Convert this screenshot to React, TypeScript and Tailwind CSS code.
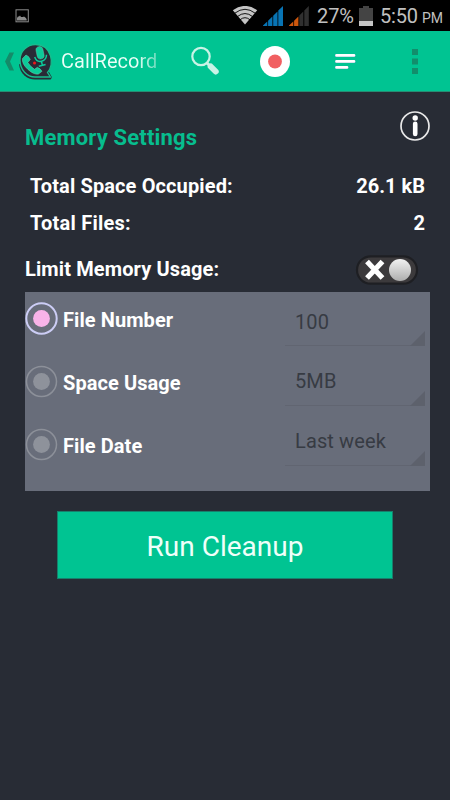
import React from "react";

function StatusBar() {
  return (
    <div className="flex h-[31px] shrink-0 items-center bg-black text-[#c0c0c0]">
      <svg className="ml-[15px] shrink-0" width="14" height="14" viewBox="0 0 14 14">
        <rect x="1" y=".8" width="12.3" height="12" fill="none" stroke="#8c8c8c" />
        <path d="M2 11.500V9l1-1.500h1l1-1 1 1.500h2l1-.5 2 1.500.7 1.500V11.500z" fill="#8c8c8c" />
      </svg>
      <svg className="ml-[203px] shrink-0" width="26" height="20" viewBox="0 0 26 20">
        <path d="M.8 4.300Q13-4.500 25.200 4.300L13 18.500Z" fill="#c4c4c4" />
        <g fill="none" stroke="#000" strokeWidth="0.900">
          <path d="M2.800 7.200Q13-.6 23.200 7.200" />
          <path d="M5.500 10.500Q13 4.600 20.500 10.500" />
          <path d="M8 13.800Q13 9.600 18 13.800" />
        </g>
      </svg>
      <svg className="ml-[5px] shrink-0" width="21" height="20" viewBox="0 0 21 20">
        <path d="M0 20V19.500L4.300 15.500V20zM5.100 20V14.700L9.400 10.500V20zM10.200 20V9.700L14.500 5.500V20zM15.300 20V4.500L20 0V20z" fill="#0874b4" />
      </svg>
      <svg className="ml-[5px] shrink-0" width="21" height="20" viewBox="0 0 21 20">
        <path d="M0 20V19.500L4.300 15.500V20zM5.100 20V14.700L9.400 10.500V20z" fill="#ce570d" />
        <path d="M10.300 20V9.500L14.300 5.500V20zM15.300 20V4.500L19.800 0V20z" fill="#303030" />
      </svg>
      <span className="ml-[7px] w-[42px] text-[20px] leading-[30px] tracking-[-0.1px] whitespace-nowrap">27%</span>
      <svg className="shrink-0" width="14" height="20" viewBox="0 0 14 20">
        <path d="M0 2h4V0h6v2h4v18H0z" fill="#444" />
        <path d="M0 15h14v5H0z" fill="#c6c6c6" />
      </svg>
      <span className="ml-[7px] w-[42px] text-[20px] leading-[30px] tracking-[-0.15px] whitespace-nowrap">5:50</span>
      <span className="mt-[5px] text-[14px] leading-5 tracking-[-0.2px] whitespace-nowrap">PM</span>
    </div>
  );
}

function Logo() {
  return (
    <svg className="ml-[3px] shrink-0" width="36" height="39" viewBox="0 0 36 39">
      <path d="M1 22C2 32 9 37.500 17 37.500H32.500L34 35.500 31 30Z" fill="#292b36" />
      <path d="M17.500 2.500A15.500 15.500 0 0 0 2 18C2 28 9 35 17 35H32.500L29.500 30.500C37 23 34 2.500 17.500 2.500Z" fill="#292b36" stroke="#17bd8e" strokeWidth="1.300" />
      <path
        d="M4.500 16.500L8 13Q11 14 12.300 17.500L9.800 20.500Q12.500 24.800 16.500 27.300L19.300 25.300Q22.500 26.500 24 29.300L20.500 32Q16 33 10 27.500Q3.500 21.500 4.500 16.500Z"
        fill="#0cca99"
        stroke="#6ad6b5"
        strokeWidth=".5"
      />
      <rect x="18.500" y="4.500" width="7" height="12.500" rx="3.500" fill="#0cca99" stroke="#6ad6b5" strokeWidth=".4" transform="rotate(-12 22 10.500)" />
      <path d="M16.700 15Q18.500 20.300 23.500 19.200Q28.500 18 28.500 12.800M23.500 19.500l.8 3.500M20.800 24.200l6.800-1.800" fill="none" stroke="#0cca99" strokeWidth="1.500" />
      <circle cx="16.500" cy="21" r="1.500" fill="#ef1919" />
    </svg>
  );
}

function ActionBar() {
  return (
    <header className="flex h-[61px] shrink-0 items-center border-b border-[#268e73] bg-[#00c492]">
      <svg className="ml-[5px] shrink-0" width="10" height="19" viewBox="0 0 10 19">
        <path d="M4.500 .5h4.500L5 9.500 9 18.500H4.500L0 9.500z" fill="#148b69" />
      </svg>
      <Logo />
      <span className="ml-[7px] w-[97px] bg-linear-to-r from-[#eafff8] from-78% to-[#58d8b8] bg-clip-text text-[20px] leading-7 whitespace-nowrap text-transparent">
        CallRecord
      </span>
      <svg className="ml-[33px] shrink-0" width="30" height="30" viewBox="0 0 30 30">
        <circle cx="10" cy="10.500" r="8.700" fill="none" stroke="#c9f3e6" strokeWidth="2.200" />
        <path d="M16 17l3.500 3.500" stroke="#c9f3e6" strokeWidth="3" />
        <path d="M19.700 20.500l5 5" stroke="#c9f3e6" strokeWidth="6" strokeLinecap="round" />
      </svg>
      <svg className="ml-[39px] shrink-0" width="30" height="31" viewBox="0 0 30 31">
        <ellipse cx="15" cy="15.500" rx="15" ry="15.400" fill="#fff" />
        <circle cx="15" cy="15.500" r="6.900" fill="#f15f61" />
      </svg>
      <svg className="ml-[45px] shrink-0" width="21" height="18" viewBox="0 0 21 18">
        <path d="M1.500 3.500h17.500M1.500 9.500h17.500M1.500 15.500h10.500" stroke="#4c8fb0" strokeWidth="3.200" strokeLinecap="round" />
        <path d="M1.500 3.400h17.500M1.500 9.400h17.500M1.500 15.400h10.500" stroke="#fff" strokeWidth="2.700" strokeLinecap="round" />
      </svg>
      <svg className="ml-[56px] shrink-0" width="6" height="25" viewBox="0 0 6 25">
        <path d="M0 0h6v6H0zM0 9.500h6v6H0zM0 19h6v6H0z" fill="#128e6c" />
      </svg>
    </header>
  );
}

function Toggle() {
  return (
    <svg className="mt-[7px] mr-[11px] shrink-0" width="64" height="30" viewBox="0 0 64 30">
      <defs>
        <linearGradient id="knob" x1="0" y1="0" x2="0" y2="1">
          <stop stopColor="#f2f2f2" />
          <stop offset="1" stopColor="#adadad" />
        </linearGradient>
      </defs>
      <rect x="2" y="1.300" width="60" height="27.400" rx="13.700" fill="#3c3a3c" stroke="#1e1f23" strokeWidth="2.200" />
      <path d="M12 6.500l15.500 16.500M27.500 6.500l-15.500 16.500" stroke="#fff" strokeWidth="5.200" />
      <circle cx="45" cy="15" r="11" fill="url(#knob)" />
    </svg>
  );
}

function Radio({ selected }: { selected: boolean }) {
  return (
    <svg className="shrink-0" width="33" height="34" viewBox="0 0 33 34">
      <circle cx="16.500" cy="16.500" r={selected ? 15.2 : 15} fill="none" stroke={selected ? "#cccdf5" : "#8c9099"} strokeWidth={selected ? 2 : 1.5} />
      <circle cx="16.500" cy="16.500" r="8.400" fill={selected ? "#f8b3e8" : "#8e929b"} />
    </svg>
  );
}

const options = ["File Number", "Space Usage", "File Date"];
const values = ["100", "5MB", "Last week"];

function Limits() {
  return (
    <section className="flex h-[199px] shrink-0 justify-between bg-[#686d7a] pr-[5px]">
      <div className="flex flex-col pt-[10px]">
        {options.map((label, i) => (
          <label key={label} className="flex h-[63px] items-start">
            <Radio selected={i === 0} />
            <span className="ml-[5px] pt-[2.5px] text-[20px] leading-[30px] font-bold tracking-[0.08px] text-white whitespace-nowrap">{label}</span>
          </label>
        ))}
      </div>
      <div className="flex w-[140px] flex-col">
        {values.map((value, i) => (
          <div key={value} className={`mb-px flex items-end justify-between border-b border-[#616571] ${i === 0 ? "h-[54px]" : "h-[59px]"}`}>
            <span className={`ml-[10px] text-[20px] leading-[30px] tracking-[0.12px] text-[#373b43] whitespace-nowrap ${i === 0 ? "mb-[8px]" : "mb-[9px]"}`}>{value}</span>
            <svg width="15" height="15" viewBox="0 0 15 15" className="-mb-px shrink-0">
              <path d="M15 0V15H0z" fill="#5d616c" />
            </svg>
          </div>
        ))}
      </div>
    </section>
  );
}

export default function App() {
  return (
    <div className="flex h-[800px] w-[450px] flex-col overflow-hidden bg-[#282c35] font-['Roboto',sans-serif]">
      <StatusBar />
      <ActionBar />
      <main className="flex flex-col pr-5 pl-[25px]">
        <div className="flex h-[75px] items-start justify-between">
          <h1 className="mt-[31px] text-[22px] leading-[30px] font-bold tracking-[0.17px] text-[#07bd8e] whitespace-nowrap">Memory Settings</h1>
          <svg className="mt-[19px] shrink-0" width="31" height="31" viewBox="0 0 31 31">
            <circle cx="16" cy="15" r="14" fill="none" stroke="#e9e9e9" strokeWidth="1.700" />
            <circle cx="16.200" cy="7" r="2.700" fill="#fff" />
            <path d="M16.200 12.700v10.300" stroke="#fff" strokeWidth="4.600" strokeLinecap="round" />
          </svg>
        </div>
        <div className="flex h-[37px] items-center justify-between pr-[5px] pl-[5px] text-[20px] font-bold text-white">
          <span className="tracking-[0.12px]">Total Space Occupied:</span>
          <span>26.1 kB</span>
        </div>
        <div className="flex h-[37px] items-center justify-between pr-[5px] pl-[5px] text-[20px] font-bold text-white">
          <span className="tracking-[0.25px]">Total Files:</span>
          <span>2</span>
        </div>
        <div className="flex h-[51px] items-center justify-between">
          <span className="mt-[5px] text-[20px] font-bold tracking-[0.12px] text-white">Limit Memory Usage:</span>
          <Toggle />
        </div>
        <Limits />
        <button className="mt-[20px] ml-[32px] h-[68px] w-[336px] border border-[#16806c] bg-[#00c492] pt-[3px] text-[28px] text-[#effff9]">
          Run Cleanup
        </button>
      </main>
    </div>
  );
}
